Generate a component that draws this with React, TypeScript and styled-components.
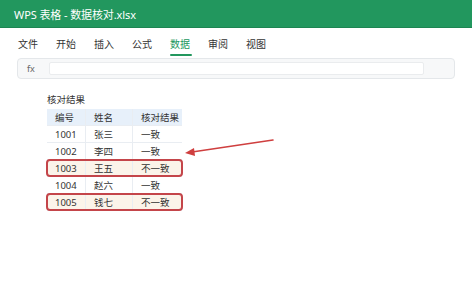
import React from "react";
import styled, { createGlobalStyle } from "styled-components";

const Global = createGlobalStyle`
  html, body { margin: 0; padding: 0; background: #ffffff; }
  body { font-family: "Noto Sans", "Noto Sans CJK SC", sans-serif; color: #333; }
  * { box-sizing: border-box; }
`;

const Page = styled.div`
  width: 472px;
  height: 288px;
  position: relative;
  overflow: hidden;
  background: #fff;
`;

const TitleBar = styled.div`
  height: 28px;
  background: #22975e;
  border-bottom: 1px solid #1d8552;
  display: flex;
  align-items: center;
  padding-left: 14px;
  color: #fff;
  font-size: 11px;
  letter-spacing: -0.1px;
`;

const Menu = styled.div`
  height: 30px;
  display: flex;
  align-items: center;
  padding-left: 18px;
  gap: 18px;
`;

const MenuItem = styled.div<{ $active?: boolean }>`
  position: relative;
  font-size: 10px;
  width: 20px;
  white-space: nowrap;
  color: ${(p) => (p.$active ? "#22975e" : "#333")};
  &::after {
    content: "";
    display: ${(p) => (p.$active ? "block" : "none")};
    position: absolute;
    left: 0;
    right: -2px;
    bottom: -5px;
    height: 2px;
    border-radius: 1px;
    background: #22975e;
  }
`;

const FormulaBar = styled.div`
  margin: 0 17px;
  height: 21px;
  border: 1px solid #e4e7ea;
  border-radius: 4px;
  background: #f7f8f9;
  display: flex;
  align-items: center;
  padding: 0 30px 0 9px;
`;

const Fx = styled.span`
  font-size: 9px;
  color: #666;
  width: 22px;
`;

const FormulaInput = styled.div`
  flex: 1;
  height: 13px;
  background: #fff;
  border: 1px solid #eaecee;
  border-radius: 2px;
`;

const Content = styled.div`
  position: relative;
  padding: 14px 0 0 47px;
`;

const Caption = styled.div`
  font-size: 9.5px;
  color: #333;
  height: 16px;
  line-height: 14px;
`;

const Table = styled.div`
  width: 135px;
  display: flex;
  flex-direction: column;
`;

const Row = styled.div<{ $head?: boolean; $flag?: boolean }>`
  position: relative;
  display: grid;
  grid-template-columns: 39px 47px 49px;
  height: 17px;
  align-items: center;
  font-size: 9.5px;
  color: #333;
  background: ${(p) => (p.$head ? "#e7f0fa" : p.$flag ? "#fbf4ea" : "#fff")};
  border-bottom: 1px solid #e9edf2;
  &::after {
    content: "";
    display: ${(p) => (p.$flag ? "block" : "none")};
    position: absolute;
    left: -1px;
    right: -1px;
    top: -1px;
    bottom: -1px;
    border: 2px solid #c4454a;
    border-radius: 4px;
  }
`;

const Cell = styled.div<{ $last?: boolean }>`
  height: 100%;
  display: flex;
  align-items: center;
  padding-left: 8px;
  border-right: ${(p) => (p.$last ? "none" : "1px solid #e9edf2")};
  white-space: nowrap;
`;

const Arrow = styled.svg`
  position: absolute;
  left: 0;
  top: 0;
  pointer-events: none;
`;

const rows = [
  { id: "1001", name: "张三", res: "一致", flag: false },
  { id: "1002", name: "李四", res: "一致", flag: false },
  { id: "1003", name: "王五", res: "不一致", flag: true },
  { id: "1004", name: "赵六", res: "一致", flag: false },
  { id: "1005", name: "钱七", res: "不一致", flag: true },
];

const menu = ["文件", "开始", "插入", "公式", "数据", "审阅", "视图"];

export default function App() {
  return (
    <Page>
      <Global />
      <TitleBar>WPS 表格 - 数据核对.xlsx</TitleBar>
      <Menu>
        {menu.map((m) => (
          <MenuItem key={m} $active={m === "数据"}>
            {m}
          </MenuItem>
        ))}
      </Menu>
      <FormulaBar>
        <Fx>fx</Fx>
        <FormulaInput />
      </FormulaBar>
      <Content>
        <Caption>核对结果</Caption>
        <Table>
          <Row $head>
            <Cell>编号</Cell>
            <Cell>姓名</Cell>
            <Cell $last>核对结果</Cell>
          </Row>
          {rows.map((r) => (
            <Row key={r.id} $flag={r.flag}>
              <Cell>{r.id}</Cell>
              <Cell>{r.name}</Cell>
              <Cell $last>{r.res}</Cell>
            </Row>
          ))}
        </Table>
      </Content>
      <Arrow width="472" height="288" viewBox="0 0 472 288">
        <line x1="273" y1="140" x2="192" y2="152" stroke="#cf3f3f" strokeWidth="1.6" strokeLinecap="round" />
        <polygon points="185,153 194,148 195,156" fill="#cf3f3f" />
      </Arrow>
    </Page>
  );
}
